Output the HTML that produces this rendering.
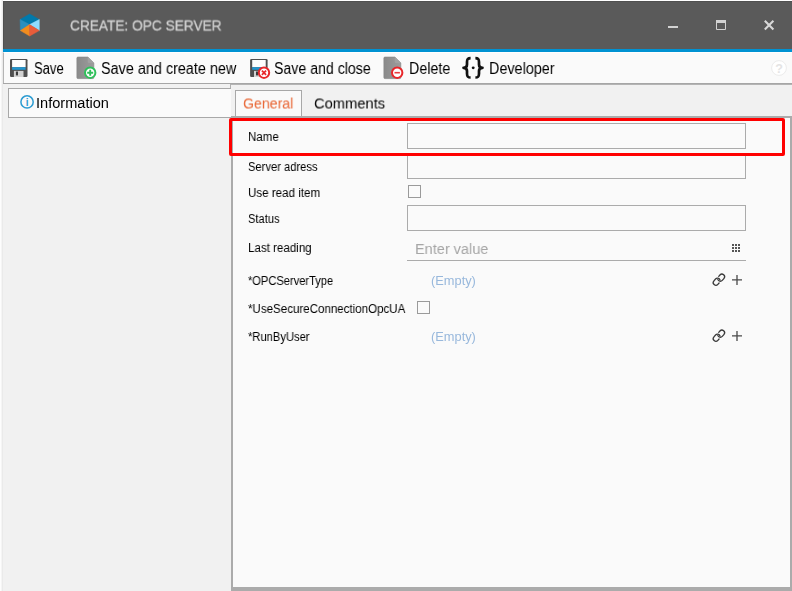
<!DOCTYPE html>
<html>
<head>
<meta charset="utf-8">
<title>Create: OPC Server</title>
<style>
html,body{margin:0;padding:0;}
body{width:792px;height:591px;overflow:hidden;background:#fff;position:relative;
  font-family:"Liberation Sans",sans-serif;color:#1a1a1a;}
.abs{position:absolute;}
svg{position:absolute;overflow:visible;}
.t{position:absolute;white-space:nowrap;line-height:1;transform-origin:0 0;will-change:transform;}
#shadow{left:0;top:0;width:3px;height:591px;background:linear-gradient(to right,#fdfdfd 0,#fdfdfd 1px,#f5f5f5 1px,#f5f5f5 2px,#eaeaea 2px,#eaeaea 3px);}
#titlebar{left:3px;top:1px;width:788px;height:47px;background:#5a5a5a;border-left:1px solid #505050;border-top:1px solid #505050;}
#stripe{left:3px;top:49px;width:789px;height:3px;background:#0092d2;}
#toolbar{left:3px;top:52px;width:788px;height:30px;background:#fafafa;border-left:1px solid #b4b4b4;border-top:1px solid #fff;}
#tbline{left:3px;top:83px;width:789px;height:1px;background:#a6a6a6;}
#tbline2{left:231px;top:84px;width:561px;height:1px;background:#b4b4b4;}
#bodybg{left:3px;top:84px;width:789px;height:507px;background:#f1f1f1;}
#leftedge{display:none;}
#stub{left:230px;top:84px;width:1px;height:5px;background:#b0b0b0;}
#infobox{left:8px;top:88px;width:222px;height:28px;border:1px solid #a8a8a8;border-right:none;background:#fafafa;}
#panel{left:231px;top:116px;width:557px;height:469px;border:2px solid #ababab;border-bottom-width:4px;background:#fafafa;}
#tabgen{left:235px;top:90px;width:65px;height:27px;border:1px solid #a8a8a8;border-bottom:none;background:#fafafa;}
#redbox{left:229px;top:118px;width:550px;height:32px;border:3px solid #f00;border-radius:2px;}
.inp{position:absolute;left:407px;width:337px;height:24px;border:1px solid #ababab;background:#fafafa;}
.chk{position:absolute;width:11px;height:11px;border:1px solid #9a9a9a;background:#fafafa;}

</style>
</head>
<body>
<div class="abs" id="shadow"></div>
<div class="abs" id="titlebar"></div>
<div class="abs" id="stripe"></div>
<div class="abs" id="toolbar"></div>
<div class="abs" id="bodybg"></div>
<div class="abs" id="tbline"></div>
<div class="abs" id="tbline2"></div>
<div class="abs" id="leftedge"></div>
<div class="abs" id="stub"></div>
<div class="abs" id="infobox"></div>
<div class="abs" id="tabgen"></div>
<div class="abs" id="panel"></div>

<div class="inp" style="top:123px;"></div>
<div class="inp" style="top:153px;"></div>
<div class="chk" style="left:408px;top:185px;"></div>
<div class="inp" style="top:205px;"></div>
<div class="abs" style="left:407px;top:260px;width:339px;height:1px;background:#ababab;"></div>
<div class="chk" style="left:417px;top:301px;"></div>

<svg id="icons" width="792" height="591" viewBox="0 0 792 591" style="left:0;top:0;">
  <defs>
    <linearGradient id="docg" x1="0" y1="0" x2="1" y2="0">
      <stop offset="0" stop-color="#8a8a8a"/><stop offset="1" stop-color="#9c9c9c"/>
    </linearGradient>
    <g id="floppy">
      <rect x="0" y="0" width="17.5" height="18" rx="1.2" fill="#4f4f4f"/>
      <rect x="2.1" y="1" width="13.5" height="7.2" fill="#fdfdfd"/>
      <rect x="2.1" y="8.2" width="13.5" height="2.6" fill="#2196d0"/>
      <rect x="3.9" y="11.9" width="9.6" height="6.1" fill="#d2d2d2"/>
      <rect x="5.9" y="12.5" width="2.1" height="3.9" fill="#3a3a3a"/>
    </g>
    <g id="doc">
      <path d="M1 0 H10.9 L16.9 5.8 V20.5 a1 1 0 0 1 -1 1 H1 a1 1 0 0 1 -1 -1 V1 a1 1 0 0 1 1 -1 Z" fill="url(#docg)" stroke="#868686" stroke-width="0.7" stroke-linejoin="round"/>
      <path d="M10.9 0 L16.9 5.8 H11.9 a1 1 0 0 1 -1 -1 Z" fill="#a2a2a2"/>
    </g>
    <g id="link" fill="none" stroke="#3a3a3a" stroke-width="1.3" stroke-linecap="round">
      <path transform="translate(-2.2,2.0) rotate(-48)" d="M0.6 2.65 H-1.20 A2.65 2.65 0 0 1 -1.20 -2.65 H1.20 A2.65 2.65 0 0 1 3.49 1.32"/>
      <path transform="translate(2.2,-2.0) rotate(132)" d="M0.6 2.65 H-1.20 A2.65 2.65 0 0 1 -1.20 -2.65 H1.20 A2.65 2.65 0 0 1 3.49 1.32"/>
    </g>
    <g id="plus" stroke="#4a4a4a" stroke-width="1.3">
      <path d="M-5 0 H5 M0 -5 V5"/>
    </g>
  </defs>

  <!-- logo -->
  <g id="logo">
    <polygon points="29.7,14 39.3,19.5 29.6,24.6 20.1,19.5" fill="#0079ab" stroke="#0079ab" stroke-width="0.5" stroke-linejoin="round"/>
    <polygon points="20.1,19.5 29.6,24.6 20.4,30.6" fill="#2b8fbf" stroke="#2b8fbf" stroke-width="0.5" stroke-linejoin="round"/>
    <polygon points="39.3,19.5 39.3,30.6 29.6,24.6" fill="#8fdcff" stroke="#8fdcff" stroke-width="0.5" stroke-linejoin="round"/>
    <polygon points="20.4,30.6 29.6,24.6 29.7,36" fill="#f28c1e" stroke="#f28c1e" stroke-width="0.5" stroke-linejoin="round"/>
    <polygon points="39.3,30.6 29.7,36 29.6,24.6" fill="#e95c3a" stroke="#e95c3a" stroke-width="0.5" stroke-linejoin="round"/>
  </g>

  <!-- window controls -->
  <rect x="668" y="26" width="10" height="2" fill="#d2d2d2"/>
  <path d="M716.5 21.5 h9 v8 h-9 z" fill="none" stroke="#d2d2d2" stroke-width="1"/>
  <rect x="716" y="20" width="10" height="3" fill="#d2d2d2"/>
  <path d="M764.8 20.8 L773.4 29.4 M773.4 20.8 L764.8 29.4" stroke="#d8d8d8" stroke-width="2.1" fill="none"/>

  <!-- toolbar icons -->
  <use href="#floppy" x="10" y="59"/>
  <use href="#doc" x="76.9" y="57.1"/>
  <circle cx="90.2" cy="72.7" r="5.2" fill="#fff" stroke="#2fc05a" stroke-width="2"/>
  <path d="M87.2 72.7 H93.2 M90.2 69.7 V75.7" stroke="#2fc05a" stroke-width="1.9"/>

  <use href="#floppy" x="250.1" y="59"/>
  <circle cx="264" cy="72.7" r="5.2" fill="#fff" stroke="#e8262a" stroke-width="2"/>
  <path d="M261.9 70.6 L266.1 74.8 M266.1 70.6 L261.9 74.8" stroke="#e8262a" stroke-width="1.7"/>

  <use href="#doc" x="383.9" y="57.1"/>
  <circle cx="397.2" cy="72.7" r="5.2" fill="#fff" stroke="#e8262a" stroke-width="2"/>
  <path d="M394.5 72.7 H399.9" stroke="#ea3a3e" stroke-width="1.6"/>

  <!-- braces -->
  <g fill="none" stroke="#111" stroke-width="2.7" stroke-linejoin="round">
    <path d="M470.6 58.2 C467.4 58.2 467 59.6 467 62 V64.5 C467 66.4 466 67.8 463.5 67.8 C466 67.8 467 69.2 467 71.1 V73.6 C467 76 467.4 77.5 470.6 77.5"/>
    <path d="M475.4 58.2 C478.6 58.2 479 59.6 479 62 V64.5 C479 66.4 480 67.8 482.5 67.8 C480 67.8 479 69.2 479 71.1 V73.6 C479 76 478.6 77.5 475.4 77.5"/>
  </g>
  <circle cx="473.2" cy="67.85" r="1.45" fill="#111"/>

  <!-- help -->
  <circle cx="779" cy="68" r="7.4" fill="#fff" stroke="#ececec" stroke-width="1"/>
  <text x="779" y="72.6" text-anchor="middle" font-family="Liberation Sans, sans-serif" font-size="12.5" font-weight="bold" fill="#e4e4e4">?</text>

  <!-- info icon -->
  <circle cx="27.05" cy="101.95" r="6.15" fill="none" stroke="#2b9bd1" stroke-width="1.5"/>
  <text x="27.05" y="105.6" text-anchor="middle" font-family="Liberation Sans, sans-serif" font-size="10" font-weight="bold" fill="#2b9bd1">i</text>

  <!-- grid icon -->
  <g fill="#555">
    <rect x="732" y="244" width="2" height="2"/><rect x="735" y="244" width="2" height="2"/><rect x="738" y="244" width="2" height="2"/>
    <rect x="732" y="247" width="2" height="2"/><rect x="735" y="247" width="2" height="2"/><rect x="738" y="247" width="2" height="2"/>
    <rect x="732" y="250" width="2" height="2"/><rect x="735" y="250" width="2" height="2"/><rect x="738" y="250" width="2" height="2"/>
  </g>

  <!-- link + plus -->
  <use href="#link" x="718.9" y="279.7"/>
  <use href="#plus" x="737" y="279.9"/>
  <use href="#link" x="718.9" y="335.7"/>
  <use href="#plus" x="737" y="335.9"/>
</svg>

<!-- text -->
<span class="t" id="title" style="left:70.20px;top:18.12px;font-size:15.1px;color:#d2d2d2;transform:translate(0px,-0.5px) scaleX(0.9067);-webkit-text-stroke:0.3px #d2d2d2;">CREATE: OPC SERVER</span>
<span class="t" id="tsave" style="left:33.90px;top:60.63px;font-size:15.8px;color:#000;transform:translate(0px,0px) scaleX(0.8246);">Save</span>
<span class="t" id="tnew" style="left:101.40px;top:60.63px;font-size:15.8px;color:#000;transform:translate(0px,0px) scaleX(0.9116);">Save and create new</span>
<span class="t" id="tclose" style="left:274.00px;top:60.63px;font-size:15.8px;color:#000;transform:translate(0px,0px) scaleX(0.8951);">Save and close</span>
<span class="t" id="tdel" style="left:409.10px;top:60.63px;font-size:15.8px;color:#000;transform:translate(0px,0px) scaleX(0.9021);">Delete</span>
<span class="t" id="tdev" style="left:488.90px;top:60.63px;font-size:15.8px;color:#000;transform:translate(0px,0px) scaleX(0.9095);">Developer</span>
<span class="t" id="tinfo" style="left:35.70px;top:96.15px;font-size:14.0px;color:#000;transform:translate(0px,0px) scaleX(1.0404);">Information</span>
<span class="t" id="tgen" style="left:242.70px;top:95.48px;font-size:15.5px;color:#e8622f;transform:translate(0px,0.5px) scaleX(0.9119);">General</span>
<span class="t" id="tcom" style="left:313.70px;top:95.48px;font-size:15.5px;color:#000;transform:translate(0px,0.5px) scaleX(0.9475);">Comments</span>
<span class="t" id="l1" style="left:247.90px;top:131.32px;font-size:12.5px;color:#000;transform:translate(0px,0px) scaleX(0.9207);">Name</span>
<span class="t" id="l2" style="left:248.40px;top:160.92px;font-size:12.5px;color:#000;transform:translate(0px,0px) scaleX(0.8945);">Server adress</span>
<span class="t" id="l3" style="left:247.90px;top:186.82px;font-size:12.5px;color:#000;transform:translate(0px,0px) scaleX(0.9266);">Use read item</span>
<span class="t" id="l4" style="left:248.40px;top:212.72px;font-size:12.5px;color:#000;transform:translate(0px,0px) scaleX(0.8917);">Status</span>
<span class="t" id="l5" style="left:247.80px;top:242.42px;font-size:12.5px;color:#000;transform:translate(0px,0px) scaleX(0.9257);">Last reading</span>
<span class="t" id="l6" style="left:247.80px;top:275.32px;font-size:12.5px;color:#000;transform:translate(0px,0px) scaleX(0.8876);">*OPCServerType</span>
<span class="t" id="l7" style="left:247.80px;top:303.22px;font-size:12.5px;color:#000;transform:translate(0px,0px) scaleX(0.9240);">*UseSecureConnectionOpcUA</span>
<span class="t" id="l8" style="left:247.80px;top:331.12px;font-size:12.5px;color:#000;transform:translate(0px,0px) scaleX(0.8941);">*RunByUser</span>
<span class="t" id="ph" style="left:414.80px;top:241.48px;font-size:15.5px;color:#a6a6a6;transform:translate(0px,0px) scaleX(0.9358);">Enter value</span>
<span class="t" id="e1" style="left:430.90px;top:275.16px;font-size:12.8px;color:#98b8dc;transform:translate(0px,0px) scaleX(1.0019);">(Empty)</span>
<span class="t" id="e2" style="left:430.90px;top:330.96px;font-size:12.8px;color:#98b8dc;transform:translate(0px,0px) scaleX(1.0019);">(Empty)</span>
<div class="abs" id="redbox"></div>
</body>
</html>
